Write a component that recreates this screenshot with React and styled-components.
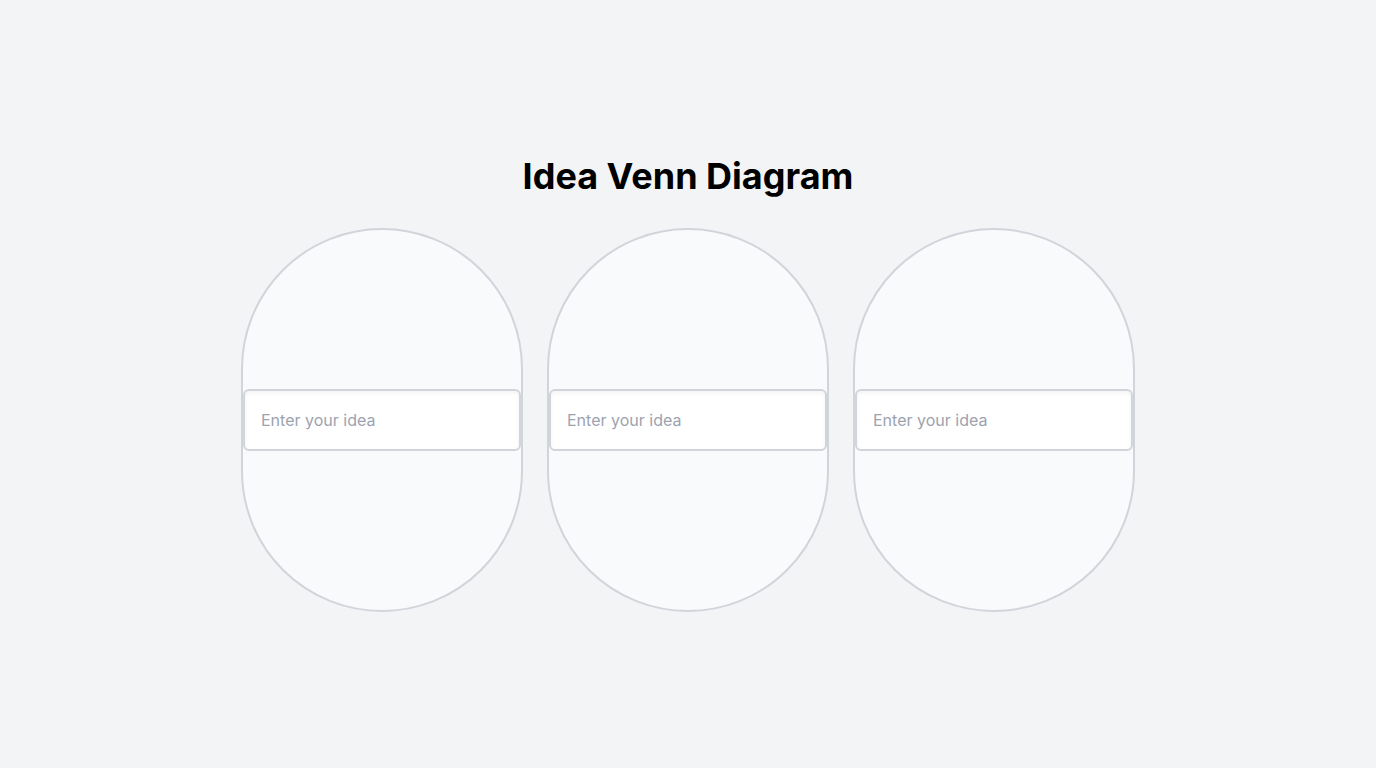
import styled, { createGlobalStyle } from "styled-components";

const GlobalStyle = createGlobalStyle`
    body{
        margin: 0;
        background-color: #f3f4f6;
        font-family: Inter, "Liberation Sans", sans-serif;
    }
`;

export default function App(){
    const circles = [0, 1, 2];
    return(
        <Page>
            <GlobalStyle />
            <Title>Idea Venn Diagram</Title>
            <CircleRow>
                {circles.map((i) => (
                    <Circle key={i}>
                        <IdeaInput type="text" placeholder="Enter your idea" />
                    </Circle>
                ))}
            </CircleRow>
        </Page>
    );
}

const Page = styled.div`
    min-height: 100vh;
    display: flex;
    flex-direction: column;
    align-items: center;
    justify-content: center;
`;

const Title = styled.h1`
    margin: 0 0 32px 0;
    font-size: 36px;
    line-height: 40px;
    font-weight: 700;
    color: #000;
`;

const CircleRow = styled.div`
    display: flex;
    gap: 24px;
`;

const Circle = styled.div`
    box-sizing: border-box;
    width: 282px;
    height: 384px;
    border: 2px solid #d1d5db;
    border-radius: 9999px;
    background-color: #f9fafb;
    display: flex;
    align-items: center;
`;

const IdeaInput = styled.input`
    box-sizing: border-box;
    width: 100%;
    height: 62px;
    padding: 0 16px;
    border: 2px solid #d1d5db;
    border-radius: 6px;
    background-color: #fff;
    box-shadow: inset 0 2px 4px rgba(0,0,0,0.05);
    font-family: Inter, "Liberation Sans", sans-serif;
    font-size: 16px;
    color: #111827;
    outline: none;
    &::placeholder{
        color: #9ca3af;
    }
`;
